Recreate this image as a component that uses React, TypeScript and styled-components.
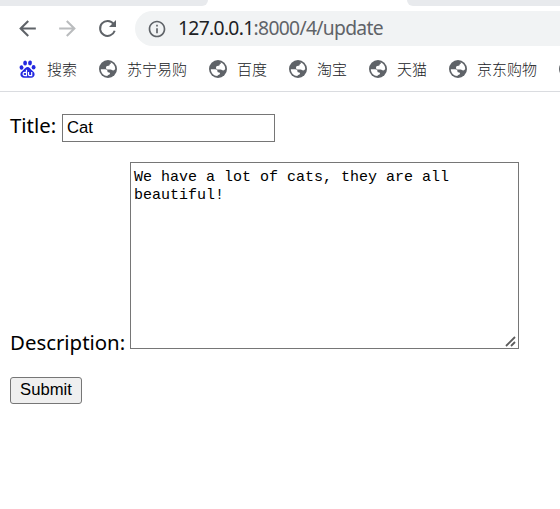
import React from 'react';
import styled, { createGlobalStyle } from 'styled-components';
import { MdArrowBack, MdArrowForward, MdInfoOutline } from 'react-icons/md';

const GlobalStyle = createGlobalStyle`
  * { box-sizing: border-box; }
  body { margin: 0; background: #fff; overflow: hidden; }
`;

const Browser = styled.div`
  width: 560px;
  height: 509px;
  overflow: hidden;
  background: #fff;
`;

const TabStrip = styled.div`
  display: flex;
  justify-content: space-between;
  height: 6px;
`;

const InactiveTabs = styled.div<{ $side: 'left' | 'right' }>`
  width: ${(p) => (p.$side === 'left' ? 208 : 153)}px;
  background: #e8eaed;
  border-radius: ${(p) => (p.$side === 'left' ? '0 0 10px 0' : '0 0 0 10px')};
`;

const Toolbar = styled.div`
  display: flex;
  align-items: center;
  height: 45px;
  padding-left: 15px;
`;

const NavButton = styled.span<{ $disabled?: boolean }>`
  display: flex;
  width: 40px;
  color: ${(p) => (p.$disabled ? '#babcbe' : '#5f6368')};
`;

const AddressBar = styled.div`
  display: flex;
  align-items: center;
  flex: 1;
  height: 35px;
  padding-left: 12px;
  border-radius: 18px 0 0 18px;
  background: #f1f3f4;
  color: #5f6368;
`;

const Address = styled.span`
  margin-left: 11px;
  padding-bottom: 2px;
  font: 19.3px/33px 'Noto Sans', sans-serif;
  letter-spacing: -0.68px;
  white-space: nowrap;
`;

const Host = styled.span`
  color: #202124;
`;

const Bookmarks = styled.div`
  display: flex;
  align-items: center;
  gap: 22px;
  height: 41px;
  padding: 0 0 4px 19px;
  border-bottom: 1px solid #dadce0;
`;

const Bookmark = styled.div`
  display: flex;
  align-items: center;
  gap: 10px;
  flex: none;
  color: #202124;
  font: 300 15px/20px 'Noto Sans CJK SC', sans-serif;
  white-space: nowrap;

  svg { flex: none; }
`;

const Form = styled.form`
  display: flex;
  flex-direction: column;
  align-items: flex-start;
  gap: 20px;
  padding: 19px 10px;
`;

const Field = styled.label`
  display: flex;
  align-items: baseline;
  gap: 5px;
  color: #000;
  font: 20.4px/28px 'Noto Sans', sans-serif;
`;

const DescriptionField = styled(Field)`
  align-items: flex-end;
  height: 187px;
`;

const Caption = styled.span<{ $width: number; $drop?: number }>`
  width: ${(p) => p.$width}px;
  margin-bottom: ${(p) => -(p.$drop ?? 0)}px;
  white-space: nowrap;
`;

const TextInput = styled.input`
  width: 213px;
  height: 28px;
  padding: 1px 4px 0;
  border: 1px solid #767676;
  border-radius: 0;
  outline: none;
  font: 16.67px 'Liberation Sans', sans-serif;
`;

const TextBoxFrame = styled.span`
  position: relative;
  display: flex;
`;

const TextBox = styled.textarea`
  width: 389px;
  height: 187px;
  padding: 6px 3px;
  border: 1px solid #767676;
  outline: none;
  resize: none;
  color: #000;
  font: 15px/18px 'Liberation Mono', monospace;
`;

const Grip = styled.svg`
  position: absolute;
  right: 3px;
  bottom: 2px;
`;

const SubmitButton = styled.button`
  width: 72px;
  height: 27px;
  margin-top: 8px;
  padding: 0;
  border: 1px solid #767676;
  border-radius: 3px;
  background: #efefef;
  color: #000;
  font: 16.67px 'Liberation Sans', sans-serif;
`;

const Reload = () => (
  <svg width="25" height="25" viewBox="0 0 25 25">
    <path d="M18.600 7.900A7.500 7.500 0 1 0 19.700 14.800" fill="none" stroke="#5f6368" strokeWidth="2" />
    <path d="M21 4v7h-7z" fill="#5f6368" />
  </svg>
);

const Globe = () => (
  <svg width="18" height="18" viewBox="0 0 18 18">
    <circle cx="9" cy="9" r="9" fill="#5f6368" />
    <path
      d="M11.400 2.200C14.300 3.100 16.200 5.800 16.200 8.600c0 1.200-.9 1.800-2.100 1.800-1 0-1.400-.8-2.300-.8H9.200C7.900 9.600 7 8.900 7 7.700s.9-1.900 2.200-1.900c.9 0 1.400-.3 1.400-1s1.300-.7 1.300-1.500c0-.5-.5-.7-.5-1.100zM1.800 9.300h4.500c1.500 0 2.200 1 2.200 2.200 0 .8.600.9 1.300.9.800 0 1.200.5 1.200 1.200 0 .9-.8 1.200-1.800 1.300-.6.100-.8.500-.8 1.200C4.600 15.800 1.900 13 1.800 9.300z"
      fill="#fff"
    />
  </svg>
);

const Paw = () => (
  <svg width="18" height="18" viewBox="0 0 18 18" fill="#2328e0">
    <ellipse cx="2.500" cy="7.500" rx="1.900" ry="2.300" transform="rotate(-8 2.500 7.500)" />
    <ellipse cx="6.100" cy="2.900" rx="1.900" ry="2.500" />
    <ellipse cx="11" cy="2.900" rx="1.900" ry="2.500" transform="rotate(10 11 2.900)" />
    <ellipse cx="14.600" cy="7.200" rx="1.900" ry="2.300" />
    <path d="M8.700 7c1.700 0 2.400 1.600 3.600 2.700 1.400 1.200 3.300 2.400 3.300 4.600s-1.500 3.400-3.400 3.400H5c-2 0-3.600-1.300-3.600-3.400s2-3.300 3.200-4.500C5.900 8.600 6.700 7 8.700 7z" />
    <path d="M7.500 9.800v5.900H5.800c-2.300 0-2.300-3.400 0-3.400h1.700M9.500 12v2.300c0 1 .4 1.400 1.300 1.400h1.900V12" fill="none" stroke="#fff" strokeWidth="1.200" />
  </svg>
);

const sites = ['苏宁易购', '百度', '淘宝', '天猫', '京东购物', ''];

export default function App() {
  return (
    <Browser>
      <GlobalStyle />
      <TabStrip>
        <InactiveTabs $side="left" />
        <InactiveTabs $side="right" />
      </TabStrip>
      <Toolbar>
        <NavButton><MdArrowBack size={25} /></NavButton>
        <NavButton $disabled><MdArrowForward size={25} /></NavButton>
        <NavButton><Reload /></NavButton>
        <AddressBar>
          <MdInfoOutline size={20} />
          <Address><Host>127.0.0.1</Host>:8000/4/update</Address>
        </AddressBar>
      </Toolbar>
      <Bookmarks>
        <Bookmark><Paw />搜索</Bookmark>
        {sites.map((name) => (
          <Bookmark key={name}><Globe />{name}</Bookmark>
        ))}
      </Bookmarks>
      <Form>
        <Field>
          <Caption $width={47}>Title:</Caption>
          <TextInput defaultValue="Cat" />
        </Field>
        <DescriptionField>
          <Caption $width={115} $drop={7}>Description:</Caption>
          <TextBoxFrame>
            <TextBox defaultValue="We have a lot of cats, they are all beautiful!" spellCheck={false} />
            <Grip width="11" height="11" viewBox="0 0 11 11">
              <path d="M1 10 10 1M6 10l4-4" stroke="#5c5c5c" strokeWidth="1.800" />
            </Grip>
          </TextBoxFrame>
        </DescriptionField>
        <SubmitButton type="button">Submit</SubmitButton>
      </Form>
    </Browser>
  );
}
